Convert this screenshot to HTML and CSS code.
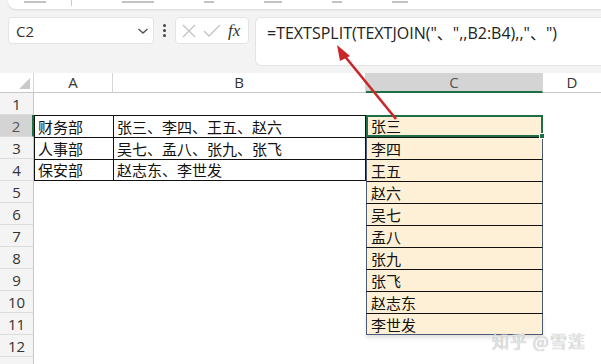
FILE: index.html
```html
<!DOCTYPE html>
<html lang="zh-CN">
<head>
    <meta charset="UTF-8">
    <meta name="viewport" content="width=device-width, initial-scale=1.0">
    <title>TEXTSPLIT</title>
    <link rel="stylesheet" href="styles.css">
</head>
<body>
    <div class="app">
        <!-- only the bottom edge of the ribbon is visible -->
        <div class="ribbon">
            <span class="rb" style="width:22px"></span>
            <span class="rb-sep"></span>
            <span class="rb" style="width:32px"></span>
            <span class="rb" style="width:10px"></span>
            <span class="rb" style="width:18px"></span>
            <span class="rb" style="width:10px"></span>
            <span class="rb" style="width:16px"></span>
        </div>

        <div class="formula-bar">
            <div class="name-box">
                <span>C2</span>
                <svg class="chev" width="12" height="8" viewBox="0 0 12 8"><path d="M1.5 2 L6 6 L10.5 2" fill="none" stroke="#555" stroke-width="1.4"/></svg>
            </div>
            <div class="dots"><i></i><i></i><i></i></div>
            <div class="func-box">
                <svg width="18" height="18" viewBox="0 0 18 18"><path d="M3 3 L15 15 M15 3 L3 15" stroke="#c4c4c4" stroke-width="1.4"/></svg>
                <svg width="20" height="18" viewBox="0 0 20 18"><path d="M2 9 L7 14 L18 3" fill="none" stroke="#c4c4c4" stroke-width="1.4"/></svg>
                <span class="fx">fx</span>
            </div>
            <div class="formula">=TEXTSPLIT(TEXTJOIN("、",,B2:B4),,"、")</div>
        </div>

        <div class="sheet">
            <div class="hd corner"><span class="tri"></span></div>
            <div class="hd">A</div>
            <div class="hd">B</div>
            <div class="hd sel-col">C</div>
            <div class="hd last">D</div>

            <div class="rh">1</div><div class="c"></div><div class="c"></div><div class="c"></div><div class="c"></div>

            <div class="rh sel-row">2</div>
            <div class="c b">财务部</div>
            <div class="c b br">张三、李四、王五、赵六</div>
            <div class="c s active">张三<span class="handle"></span></div>
            <div class="c"></div>

            <div class="rh">3</div>
            <div class="c b">人事部</div>
            <div class="c b br">吴七、孟八、张九、张飞</div>
            <div class="c s">李四</div>
            <div class="c"></div>

            <div class="rh">4</div>
            <div class="c b bb">保安部</div>
            <div class="c b br bb">赵志东、李世发</div>
            <div class="c s">王五</div>
            <div class="c"></div>

            <div class="rh">5</div><div class="c"></div><div class="c"></div><div class="c s">赵六</div><div class="c"></div>
            <div class="rh">6</div><div class="c"></div><div class="c"></div><div class="c s">吴七</div><div class="c"></div>
            <div class="rh">7</div><div class="c"></div><div class="c"></div><div class="c s">孟八</div><div class="c"></div>
            <div class="rh">8</div><div class="c"></div><div class="c"></div><div class="c s">张九</div><div class="c"></div>
            <div class="rh">9</div><div class="c"></div><div class="c"></div><div class="c s">张飞</div><div class="c"></div>
            <div class="rh">10</div><div class="c"></div><div class="c"></div><div class="c s">赵志东</div><div class="c"></div>
            <div class="rh">11</div><div class="c"></div><div class="c"></div><div class="c s end">李世发</div><div class="c"></div>
            <div class="rh">12</div><div class="c"></div><div class="c"></div><div class="c"></div><div class="c"></div>
            <div class="rh"></div><div class="c"></div><div class="c"></div><div class="c"></div><div class="c"></div>
        </div>

        <svg class="arrow" width="601" height="364" viewBox="0 0 601 364">
            <line x1="396" y1="119" x2="343" y2="54" stroke="#c9262a" stroke-width="2.6"/>
            <path d="M337 45 L350 56 L340 61 Z" fill="#c9262a"/>
        </svg>

        <div class="watermark">知乎 @雪莲</div>
    </div>
</body>
</html>
```

FILE: styles.css
```css
* {
    margin: 0;
    padding: 0;
    box-sizing: border-box;
}

body {
    font-family: "Noto Sans CJK SC", "Noto Sans", sans-serif;
    background: #f3f3f3;
    color: #222;
    width: 601px;
    height: 364px;
    overflow: hidden;
}

.app {
    position: relative;
    width: 601px;
    height: 364px;
}

.ribbon {
    height: 9px;
    margin: 0 0 0 8px;
    background: #fff;
    border-radius: 0 0 0 8px;
    box-shadow: 0 1px 2px rgba(0,0,0,0.12);
    display: flex;
    align-items: flex-start;
    gap: 50px;
    padding-left: 16px;
}

.rb {
    display: block;
    height: 2px;
    margin-top: 1px;
    background: #aaa;
    opacity: 0.7;
}

.rb-sep {
    width: 1px;
    height: 6px;
    background: #ccc;
    margin-left: -25px;
}

.formula-bar {
    display: flex;
    align-items: flex-start;
    margin-top: 8px;
    padding-left: 8px;
    height: 49px;
}

.name-box {
    width: 146px;
    height: 27px;
    background: #fff;
    border: 1px solid #e3e3e3;
    border-radius: 4px;
    display: flex;
    align-items: center;
    justify-content: space-between;
    padding: 0 4px 0 7px;
    font-family: "Open Sans", "Noto Sans", sans-serif;
    font-size: 15px;
    color: #333;
}

.dots {
    width: 21px;
    height: 27px;
    display: flex;
    flex-direction: column;
    align-items: center;
    justify-content: center;
    gap: 2px;
}

.dots i {
    width: 3px;
    height: 3px;
    border-radius: 50%;
    background: #444;
}

.func-box {
    width: 74px;
    height: 27px;
    background: #fff;
    border: 1px solid #e3e3e3;
    border-radius: 4px;
    display: flex;
    align-items: center;
    gap: 4px;
    padding-left: 4px;
}

.fx {
    font-family: "Liberation Serif", serif;
    font-style: italic;
    font-size: 17px;
    color: #333;
    margin-left: 2px;
}

.formula {
    flex: 1;
    height: 49px;
    margin-left: 6px;
    background: #fff;
    border: 1px solid #e3e3e3;
    border-right: none;
    border-radius: 6px 0 0 6px;
    padding: 2px 0 0 11px;
    font-family: "Open Sans", "Noto Sans CJK SC", sans-serif;
    font-size: 16px;
    color: #222;
}

.sheet {
    margin-top: 7px;
    background: #fff;
    display: grid;
    grid-template-columns: 34px 79px 253px 177px 1fr;
    grid-template-rows: 20px repeat(13, 22px);
    font-size: 15px;
}

.hd {
    background: #fff;
    border-right: 1px solid #d6d6d6;
    border-bottom: 1px solid #c6c6c6;
    text-align: center;
    line-height: 19px;
    font-family: "Open Sans", "Noto Sans", sans-serif;
    font-size: 15px;
    color: #333;
}

.hd.last {
    border-right: none;
}

.corner {
    position: relative;
}

.tri {
    position: absolute;
    right: 3px;
    bottom: 3px;
    width: 0;
    height: 0;
    border-left: 11px solid transparent;
    border-bottom: 11px solid #c9c9c9;
}

.sel-col {
    background: #d4d4d4;
    border-bottom: 2px solid #1e6f45;
    color: #555;
}

.rh {
    background: #f4f4f4;
    border-right: 1px solid #c6c6c6;
    border-bottom: 1px solid #dcdcdc;
    text-align: center;
    line-height: 22px;
    font-family: "Open Sans", "Noto Sans", sans-serif;
    font-size: 15px;
    color: #333;
}

.sel-row {
    background: #d4d4d4;
    border-right: 2px solid #1e6f45;
    color: #555;
}

.c {
    padding-left: 3px;
    line-height: 21px;
    white-space: nowrap;
    color: #111;
}

.c.b {
    border-top: 1px solid #111;
    border-left: 1px solid #111;
}

.c.br {
    border-right: 1px solid #111;
}

.c.bb {
    border-bottom: 1px solid #111;
    line-height: 20px;
}

.c.s {
    background: #fdf0d6;
    border-top: 1px solid #111;
    border-left: 1px solid #4c5b74;
    border-right: 1px solid #4c5b74;
    padding-left: 4px;
}

.c.s.end {
    border-bottom: 1px solid #4c5b74;
    box-shadow: 0 3px 4px rgba(0,0,0,0.12);
}

.c.active {
    position: relative;
    border: 2px solid #1e6f45;
    line-height: 18px;
    padding-left: 3px;
}

.handle {
    position: absolute;
    right: -4px;
    bottom: -4px;
    width: 6px;
    height: 6px;
    background: #1e6f45;
    border: 1px solid #fff;
}

.arrow {
    position: absolute;
    left: 0;
    top: 0;
    pointer-events: none;
}

.watermark {
    position: absolute;
    left: 492px;
    top: 328px;
    font-size: 17px;
    color: #e6e6e6;
    text-shadow: 0 0 1px #9a9a9a;
    letter-spacing: 1px;
}
```
